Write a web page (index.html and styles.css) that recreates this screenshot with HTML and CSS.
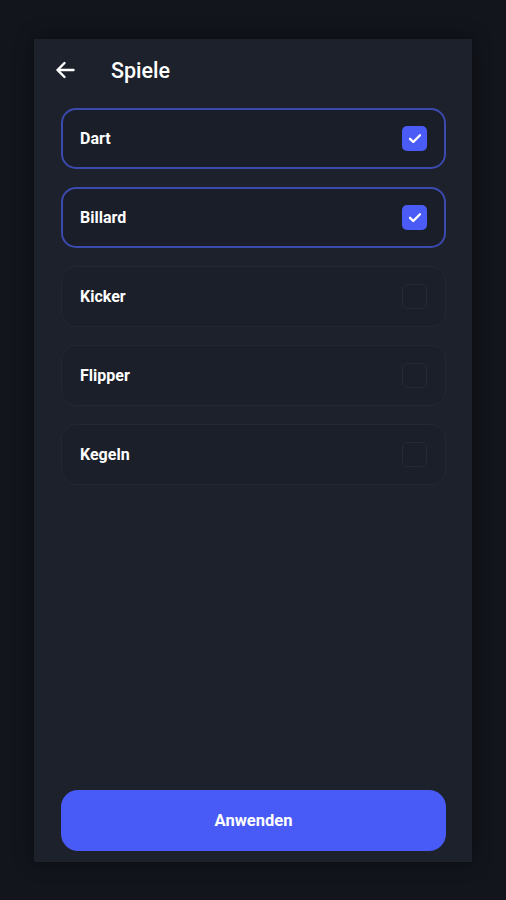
FILE: index.html
```html
<!DOCTYPE html>
<html lang="de">
<head>
<meta charset="utf-8">
<title>Spiele</title>
<link rel="stylesheet" href="styles.css">
</head>
<body>
<div class="panel">
  <header class="header">
    <svg class="back" width="20" height="18" viewBox="0 0 20 18" fill="none" stroke="#ffffff" stroke-width="2.4" stroke-linecap="round" stroke-linejoin="round">
      <path d="M18.5 9H2.5M9.5 2L2.5 9l7 7"/>
    </svg>
    <h1 class="title">Spiele</h1>
  </header>
  <ul class="list">
    <li class="item selected"><span class="label">Dart</span><span class="box checked"><svg width="14" height="11" viewBox="0 0 14 11" fill="none" stroke="#fff" stroke-width="2.3" stroke-linecap="round" stroke-linejoin="round"><path d="M2 5.8l3.3 3.2L12 2.2"/></svg></span></li>
    <li class="item selected"><span class="label">Billard</span><span class="box checked"><svg width="14" height="11" viewBox="0 0 14 11" fill="none" stroke="#fff" stroke-width="2.3" stroke-linecap="round" stroke-linejoin="round"><path d="M2 5.8l3.3 3.2L12 2.2"/></svg></span></li>
    <li class="item"><span class="label">Kicker</span><span class="box"></span></li>
    <li class="item"><span class="label">Flipper</span><span class="box"></span></li>
    <li class="item"><span class="label">Kegeln</span><span class="box"></span></li>
  </ul>
  <div class="footer">
    <button class="apply">Anwenden</button>
  </div>
</div>
</body>
</html>
```
FILE: styles.css
```css
* { box-sizing: border-box; }
html, body {
  margin: 0;
  padding: 0;
  background: #12151c;
  font-family: Roboto, "Liberation Sans", sans-serif;
  color: #ffffff;
}
body {
  padding: 39px 34px 38px 34px;
  height: 900px;
}
.panel {
  width: 438px;
  height: 823px;
  background: #1c212b;
  box-shadow: 0 0 18px rgba(0, 0, 0, 0.45);
  display: flex;
  flex-direction: column;
}
.header {
  height: 62px;
  display: flex;
  align-items: center;
  padding-left: 21px;
}
.back {
  display: block;
  width: 20px;
  height: 18px;
}
.title {
  margin: 0 0 0 36px;
  font-size: 21.5px;
  font-weight: 500;
  letter-spacing: 0;
}
.list {
  list-style: none;
  margin: 7px 0 0 0;
  padding: 0 26px 0 27px;
  display: flex;
  flex-direction: column;
  gap: 18px;
}
.item {
  height: 61px;
  border: 1.5px solid #232834;
  border-radius: 15px;
  background: #1b1f29;
  display: flex;
  align-items: center;
  justify-content: space-between;
  padding: 0 18px 0 18px;
}
.item.selected {
  border: 2px solid #3b4aae;
  background: #1a1e28;
  padding: 0 17px 0 17px;
}
.label {
  font-size: 16px;
  font-weight: 700;
}
.box {
  width: 25px;
  height: 25px;
  border-radius: 5px;
  border: 1.5px solid #242934;
  display: flex;
  align-items: center;
  justify-content: center;
}
.box.checked {
  background: #4a5cf5;
  border: none;
}
.box svg { display: block; }
.footer {
  margin-top: auto;
  padding: 0 26px 11px 27px;
}
.apply {
  width: 100%;
  height: 61px;
  border: none;
  border-radius: 17px;
  background: #485bf6;
  color: #ffffff;
  font-family: Roboto, "Liberation Sans", sans-serif;
  font-size: 16.5px;
  font-weight: 700;
  padding: 0;
}
```
